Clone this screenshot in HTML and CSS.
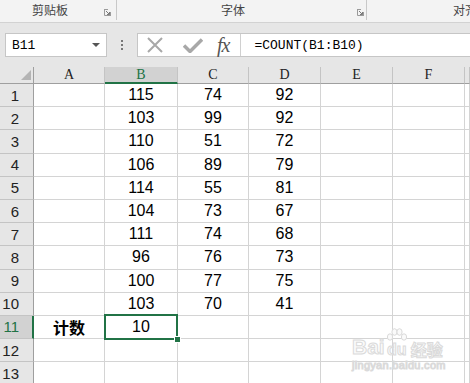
FILE: index.html
```html
<!DOCTYPE html>
<html>
<head>
<meta charset="utf-8">
<link rel="stylesheet" href="styles.css">
</head>
<body>
<div class="ribbon">
  <div class="grp g1"><span class="glabel">剪贴板</span><svg class="launch" width="7" height="7" viewBox="0 0 7 7"><path d="M0.5 0v6.5H7M0.5 0.5H4M6.5 3v4" stroke="#9a9a9a" fill="none"/><path d="M2 2l3.5 3.5M5.5 3v2.5H3" stroke="#7a7a7a" fill="none"/></svg></div>
  <div class="grp g2"><span class="glabel">字体</span><svg class="launch" width="7" height="7" viewBox="0 0 7 7"><path d="M0.5 0v6.5H7M0.5 0.5H4M6.5 3v4" stroke="#9a9a9a" fill="none"/><path d="M2 2l3.5 3.5M5.5 3v2.5H3" stroke="#7a7a7a" fill="none"/></svg></div>
  <div class="grp g3"><span class="glabel">对齐</span></div>
</div>
<div class="fbar">
  <div class="namebox"><span class="nbtext">B11</span><span class="caret"></span></div>
  <div class="dots"><i></i><i></i><i></i></div>
  <div class="fbox">
    <svg class="ico-x" width="16" height="16" viewBox="0 0 16 16"><path d="M1 1L15 15M15 1L1 15" stroke="#a8a8a8" stroke-width="2"/></svg>
    <svg class="ico-ok" width="20" height="15" viewBox="0 0 20 15"><path d="M1 7.5L7 13.5L19 1.5" stroke="#a8a8a8" stroke-width="3.5" fill="none"/></svg>
    <span class="fx">fx</span>
    <div class="fsep"></div>
    <span class="formula">=COUNT(B1:B10)</span>
  </div>
</div>
<div class="sheet">
  <div class="ch corner"><span class="tri"></span></div>
  <div class="ch">A</div><div class="ch sel">B</div><div class="ch">C</div><div class="ch">D</div><div class="ch">E</div><div class="ch">F</div><div class="ch"></div>

  <div class="rh">1</div><div class="c"></div><div class="c">115</div><div class="c">74</div><div class="c">92</div><div class="c"></div><div class="c"></div><div class="c"></div>
  <div class="rh">2</div><div class="c"></div><div class="c">103</div><div class="c">99</div><div class="c">92</div><div class="c"></div><div class="c"></div><div class="c"></div>
  <div class="rh">3</div><div class="c"></div><div class="c">110</div><div class="c">51</div><div class="c">72</div><div class="c"></div><div class="c"></div><div class="c"></div>
  <div class="rh">4</div><div class="c"></div><div class="c">106</div><div class="c">89</div><div class="c">79</div><div class="c"></div><div class="c"></div><div class="c"></div>
  <div class="rh">5</div><div class="c"></div><div class="c">114</div><div class="c">55</div><div class="c">81</div><div class="c"></div><div class="c"></div><div class="c"></div>
  <div class="rh">6</div><div class="c"></div><div class="c">104</div><div class="c">73</div><div class="c">67</div><div class="c"></div><div class="c"></div><div class="c"></div>
  <div class="rh">7</div><div class="c"></div><div class="c">111</div><div class="c">74</div><div class="c">68</div><div class="c"></div><div class="c"></div><div class="c"></div>
  <div class="rh">8</div><div class="c"></div><div class="c">96</div><div class="c">76</div><div class="c">73</div><div class="c"></div><div class="c"></div><div class="c"></div>
  <div class="rh">9</div><div class="c"></div><div class="c">100</div><div class="c">77</div><div class="c">75</div><div class="c"></div><div class="c"></div><div class="c"></div>
  <div class="rh">10</div><div class="c"></div><div class="c">103</div><div class="c">70</div><div class="c">41</div><div class="c"></div><div class="c"></div><div class="c"></div>
  <div class="rh sel">11</div><div class="c label">计数</div><div class="c active">10<span class="handle"></span></div><div class="c"></div><div class="c"></div><div class="c"></div><div class="c"></div><div class="c"></div>
  <div class="rh">12</div><div class="c"></div><div class="c"></div><div class="c"></div><div class="c"></div><div class="c"></div><div class="c"></div><div class="c"></div>
  <div class="rh">13</div><div class="c"></div><div class="c"></div><div class="c"></div><div class="c"></div><div class="c"></div><div class="c"></div><div class="c"></div>
</div>
<div class="watermark">
  <div class="wm-top">
    <span class="wm-bai">Bai</span>
    <span class="wm-paw">
      <svg class="paw" width="22" height="14" viewBox="0 0 22 14"><g fill="#fafafa" stroke="#dadada" stroke-width="1"><ellipse cx="4" cy="9" rx="2.6" ry="3.2"/><ellipse cx="8.5" cy="4" rx="2.6" ry="3.3"/><ellipse cx="13.5" cy="4" rx="2.6" ry="3.3"/><ellipse cx="18" cy="9" rx="2.6" ry="3.2"/></g></svg>
      <span class="wm-du">du</span>
    </span>
    <span class="wm-jy">经验</span>
  </div>
  <div class="wm-url">jingyan.baidu.com</div>
</div>
</body>
</html>
```
FILE: styles.css
```css
html, body {
  margin: 0;
  padding: 0;
}
body {
  width: 470px;
  height: 383px;
  overflow: hidden;
  background: #ffffff;
  position: relative;
  font-family: "Liberation Sans", Arial, sans-serif;
}

/* ribbon */
.ribbon {
  height: 22px;
  background: #f3f3f3;
  border-bottom: 1px solid #d2d2d2;
  display: flex;
  overflow: hidden;
}
.grp {
  display: flex;
  align-items: center;
  height: 20px;
  border-right: 1px solid #c8c8c8;
  flex-shrink: 0;
}
.glabel {
  font-family: "Noto Sans CJK SC", sans-serif;
  font-size: 12px;
  color: #444;
  line-height: 14px;
  white-space: nowrap;
}
.launch {
  margin-left: auto;
  margin-top: 4px;
}
.g1 { width: 116px; }
.g1 .glabel { margin-left: 32px; }
.g1 .launch { margin-right: 5px; }
.g2 { width: 249px; }
.g2 .glabel { margin-left: 104px; }
.g2 .launch { margin-right: 2px; }
.g3 {
  flex: 1 1 auto;
  flex-shrink: 1;
  min-width: 0;
  border-right: none;
  overflow: hidden;
}
.g3 .glabel { margin-left: 86px; }

/* formula bar */
.fbar {
  height: 44px;
  background: #e6e6e6;
  display: flex;
  align-items: flex-start;
  padding-top: 10px;
  box-sizing: border-box;
}
.namebox {
  margin-left: 5px;
  width: 102px;
  height: 24px;
  box-sizing: border-box;
  background: #fff;
  border: 1px solid #c6c6c6;
  display: flex;
  align-items: center;
  flex-shrink: 0;
}
.nbtext {
  font-family: "Liberation Mono", monospace;
  font-size: 13px;
  color: #000;
  margin-left: 6px;
}
.caret {
  margin-left: auto;
  margin-right: 6px;
  width: 0;
  height: 0;
  border-left: 4px solid transparent;
  border-right: 4px solid transparent;
  border-top: 4px solid #555;
}
.dots {
  width: 30px;
  height: 24px;
  display: flex;
  flex-direction: column;
  align-items: center;
  justify-content: center;
  gap: 2px;
  flex-shrink: 0;
}
.dots i {
  display: block;
  width: 2px;
  height: 2px;
  background: #777;
}
.fbox {
  flex: 1;
  height: 24px;
  box-sizing: border-box;
  background: #fff;
  border: 1px solid #c6c6c6;
  border-right: none;
  display: flex;
  align-items: center;
}
.ico-x { margin-left: 9px; }
.ico-ok { margin-left: 20px; }
.fx {
  font-family: "Liberation Serif", serif;
  font-style: italic;
  font-size: 20px;
  color: #555;
  margin-left: 14px;
  letter-spacing: -1px;
  line-height: 20px;
}
.fsep {
  width: 1px;
  height: 22px;
  background: #d0d0d0;
  margin-left: 11px;
}
.formula {
  font-family: "Liberation Mono", monospace;
  font-size: 13px;
  color: #000;
  margin-left: 13px;
}

/* sheet grid */
.sheet {
  display: grid;
  grid-template-columns: 34px 71px 73px 71px 72px 72px 72px 1fr;
  grid-template-rows: 17px;
  grid-auto-rows: 23.2px;
}
.ch {
  background: #e6e6e6;
  border-right: 1px solid #c4c4c4;
  border-bottom: 1px solid #9f9f9f;
  box-sizing: border-box;
  font-family: "Liberation Serif", serif;
  font-size: 14px;
  color: #222;
  display: flex;
  align-items: center;
  justify-content: center;
}
.ch.corner {
  border-right-color: #9f9f9f;
  position: relative;
}
.tri {
  position: absolute;
  right: 2px;
  bottom: 3px;
  width: 0;
  height: 0;
  border-left: 10px solid transparent;
  border-bottom: 10px solid #b4b4b4;
}
.ch.sel {
  background: #d2d2d2;
  color: #217346;
  border-bottom: 2px solid #217346;
}
.rh {
  background: #e6e6e6;
  border-right: 1px solid #9f9f9f;
  border-bottom: 1px solid #c4c4c4;
  box-sizing: border-box;
  font-size: 15px;
  color: #222;
  display: flex;
  align-items: center;
  justify-content: flex-end;
  padding-right: 14px;
}
.rh.sel {
  background: #d2d2d2;
  color: #217346;
  border-right: 2px solid #217346;
  padding-right: 13px;
}
.c {
  border-right: 1px solid #d4d4d4;
  border-bottom: 1px solid #d4d4d4;
  box-sizing: border-box;
  font-size: 16px;
  color: #000;
  display: flex;
  align-items: center;
  justify-content: center;
}
.c.label {
  font-family: "Noto Sans CJK SC", sans-serif;
  font-weight: bold;
  font-size: 16px;
}
.c.active {
  position: relative;
}
.c.active::after {
  content: "";
  position: absolute;
  left: -1px;
  top: -2px;
  right: -1px;
  bottom: -2px;
  border: 2px solid #217346;
}
.handle {
  position: absolute;
  right: -4px;
  bottom: -5px;
  width: 5px;
  height: 5px;
  background: #217346;
  border: 1px solid #fff;
  z-index: 2;
}

/* watermark */
.watermark {
  position: absolute;
  left: 352px;
  top: 326px;
  color: #fbfbfb;
  -webkit-text-stroke: 1px #dadada;
}
.wm-top {
  display: flex;
  align-items: flex-end;
  height: 32px;
}
.wm-bai {
  font-family: "Liberation Sans", sans-serif;
  font-weight: bold;
  font-size: 21px;
  line-height: 22px;
}
.wm-paw {
  display: flex;
  flex-direction: column;
  align-items: center;
  width: 24px;
}
.paw {
  display: block;
}
.wm-du {
  font-family: "Liberation Sans", sans-serif;
  font-weight: bold;
  font-size: 16px;
  line-height: 16px;
}
.wm-jy {
  font-family: "Noto Sans CJK SC", sans-serif;
  font-weight: bold;
  font-size: 16px;
  line-height: 18px;
  margin-left: 2px;
}
.wm-url {
  font-family: "Liberation Sans", sans-serif;
  font-size: 11px;
  line-height: 12px;
  letter-spacing: 0.3px;
  margin-top: 1px;
}
```
